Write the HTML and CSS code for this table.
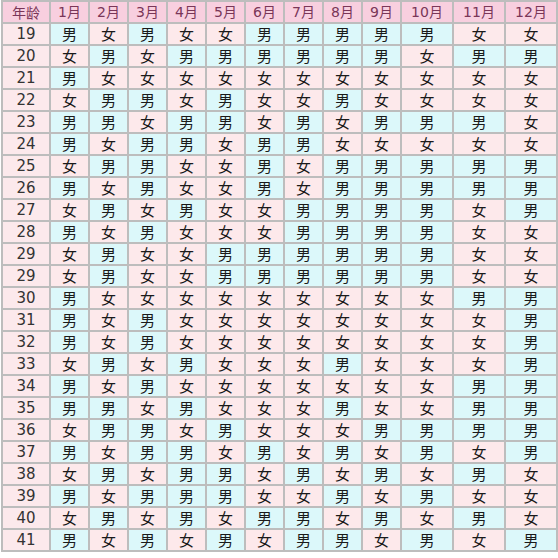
FILE: index.html
```html
<!DOCTYPE html>
<html lang="zh">
<head>
<meta charset="utf-8">
<title>生男生女表</title>
<link rel="stylesheet" href="styles.css">
</head>
<body>
<table class="chart">
<colgroup>
<col class="c-age"><col class="c-m"><col class="c-m"><col class="c-m"><col class="c-m"><col class="c-m"><col class="c-m"><col class="c-m"><col class="c-m"><col class="c-m"><col class="c-w"><col class="c-w"><col class="c-w">
</colgroup>
<thead>
<tr><th>年龄</th><th>1月</th><th>2月</th><th>3月</th><th>4月</th><th>5月</th><th>6月</th><th>7月</th><th>8月</th><th>9月</th><th>10月</th><th>11月</th><th>12月</th></tr>
</thead>
<tbody>
<tr><td class="age">19</td><td class="m">男</td><td class="f">女</td><td class="m">男</td><td class="f">女</td><td class="f">女</td><td class="m">男</td><td class="m">男</td><td class="m">男</td><td class="m">男</td><td class="m">男</td><td class="f">女</td><td class="f">女</td></tr>
<tr><td class="age">20</td><td class="f">女</td><td class="m">男</td><td class="f">女</td><td class="m">男</td><td class="m">男</td><td class="m">男</td><td class="m">男</td><td class="m">男</td><td class="m">男</td><td class="f">女</td><td class="m">男</td><td class="m">男</td></tr>
<tr><td class="age">21</td><td class="m">男</td><td class="f">女</td><td class="f">女</td><td class="f">女</td><td class="f">女</td><td class="f">女</td><td class="f">女</td><td class="f">女</td><td class="f">女</td><td class="f">女</td><td class="f">女</td><td class="f">女</td></tr>
<tr><td class="age">22</td><td class="f">女</td><td class="m">男</td><td class="m">男</td><td class="f">女</td><td class="m">男</td><td class="f">女</td><td class="f">女</td><td class="m">男</td><td class="f">女</td><td class="f">女</td><td class="f">女</td><td class="f">女</td></tr>
<tr><td class="age">23</td><td class="m">男</td><td class="m">男</td><td class="f">女</td><td class="m">男</td><td class="m">男</td><td class="f">女</td><td class="m">男</td><td class="f">女</td><td class="m">男</td><td class="m">男</td><td class="m">男</td><td class="f">女</td></tr>
<tr><td class="age">24</td><td class="m">男</td><td class="f">女</td><td class="m">男</td><td class="m">男</td><td class="f">女</td><td class="m">男</td><td class="m">男</td><td class="f">女</td><td class="f">女</td><td class="f">女</td><td class="f">女</td><td class="f">女</td></tr>
<tr><td class="age">25</td><td class="f">女</td><td class="m">男</td><td class="m">男</td><td class="f">女</td><td class="f">女</td><td class="m">男</td><td class="f">女</td><td class="m">男</td><td class="m">男</td><td class="m">男</td><td class="m">男</td><td class="m">男</td></tr>
<tr><td class="age">26</td><td class="m">男</td><td class="f">女</td><td class="m">男</td><td class="f">女</td><td class="f">女</td><td class="m">男</td><td class="f">女</td><td class="m">男</td><td class="m">男</td><td class="m">男</td><td class="m">男</td><td class="m">男</td></tr>
<tr><td class="age">27</td><td class="f">女</td><td class="m">男</td><td class="f">女</td><td class="m">男</td><td class="f">女</td><td class="f">女</td><td class="m">男</td><td class="m">男</td><td class="m">男</td><td class="m">男</td><td class="f">女</td><td class="m">男</td></tr>
<tr><td class="age">28</td><td class="m">男</td><td class="f">女</td><td class="m">男</td><td class="f">女</td><td class="f">女</td><td class="f">女</td><td class="m">男</td><td class="m">男</td><td class="m">男</td><td class="m">男</td><td class="f">女</td><td class="f">女</td></tr>
<tr><td class="age">29</td><td class="f">女</td><td class="m">男</td><td class="f">女</td><td class="f">女</td><td class="m">男</td><td class="m">男</td><td class="m">男</td><td class="m">男</td><td class="m">男</td><td class="m">男</td><td class="f">女</td><td class="f">女</td></tr>
<tr><td class="age">29</td><td class="f">女</td><td class="m">男</td><td class="f">女</td><td class="f">女</td><td class="m">男</td><td class="m">男</td><td class="m">男</td><td class="m">男</td><td class="m">男</td><td class="m">男</td><td class="f">女</td><td class="f">女</td></tr>
<tr><td class="age">30</td><td class="m">男</td><td class="f">女</td><td class="f">女</td><td class="f">女</td><td class="f">女</td><td class="f">女</td><td class="f">女</td><td class="f">女</td><td class="f">女</td><td class="f">女</td><td class="m">男</td><td class="m">男</td></tr>
<tr><td class="age">31</td><td class="m">男</td><td class="f">女</td><td class="m">男</td><td class="f">女</td><td class="f">女</td><td class="f">女</td><td class="f">女</td><td class="f">女</td><td class="f">女</td><td class="f">女</td><td class="f">女</td><td class="m">男</td></tr>
<tr><td class="age">32</td><td class="m">男</td><td class="f">女</td><td class="m">男</td><td class="f">女</td><td class="f">女</td><td class="f">女</td><td class="f">女</td><td class="f">女</td><td class="f">女</td><td class="f">女</td><td class="f">女</td><td class="m">男</td></tr>
<tr><td class="age">33</td><td class="f">女</td><td class="m">男</td><td class="f">女</td><td class="m">男</td><td class="f">女</td><td class="f">女</td><td class="f">女</td><td class="m">男</td><td class="f">女</td><td class="f">女</td><td class="f">女</td><td class="m">男</td></tr>
<tr><td class="age">34</td><td class="m">男</td><td class="f">女</td><td class="m">男</td><td class="f">女</td><td class="f">女</td><td class="f">女</td><td class="f">女</td><td class="f">女</td><td class="f">女</td><td class="f">女</td><td class="m">男</td><td class="m">男</td></tr>
<tr><td class="age">35</td><td class="m">男</td><td class="m">男</td><td class="f">女</td><td class="m">男</td><td class="f">女</td><td class="f">女</td><td class="f">女</td><td class="m">男</td><td class="f">女</td><td class="f">女</td><td class="m">男</td><td class="m">男</td></tr>
<tr><td class="age">36</td><td class="f">女</td><td class="m">男</td><td class="m">男</td><td class="f">女</td><td class="m">男</td><td class="f">女</td><td class="f">女</td><td class="f">女</td><td class="m">男</td><td class="m">男</td><td class="m">男</td><td class="m">男</td></tr>
<tr><td class="age">37</td><td class="m">男</td><td class="f">女</td><td class="m">男</td><td class="m">男</td><td class="f">女</td><td class="m">男</td><td class="f">女</td><td class="m">男</td><td class="f">女</td><td class="m">男</td><td class="f">女</td><td class="m">男</td></tr>
<tr><td class="age">38</td><td class="f">女</td><td class="m">男</td><td class="f">女</td><td class="m">男</td><td class="m">男</td><td class="f">女</td><td class="m">男</td><td class="f">女</td><td class="m">男</td><td class="f">女</td><td class="m">男</td><td class="f">女</td></tr>
<tr><td class="age">39</td><td class="m">男</td><td class="f">女</td><td class="m">男</td><td class="m">男</td><td class="m">男</td><td class="f">女</td><td class="f">女</td><td class="m">男</td><td class="f">女</td><td class="m">男</td><td class="f">女</td><td class="f">女</td></tr>
<tr><td class="age">40</td><td class="f">女</td><td class="m">男</td><td class="f">女</td><td class="m">男</td><td class="f">女</td><td class="m">男</td><td class="m">男</td><td class="f">女</td><td class="m">男</td><td class="f">女</td><td class="m">男</td><td class="f">女</td></tr>
<tr><td class="age">41</td><td class="m">男</td><td class="f">女</td><td class="m">男</td><td class="f">女</td><td class="m">男</td><td class="f">女</td><td class="m">男</td><td class="m">男</td><td class="f">女</td><td class="m">男</td><td class="f">女</td><td class="m">男</td></tr>
</tbody>
</table>
</body>
</html>
```

FILE: styles.css
```css
html, body {
  margin: 0;
  padding: 0;
  background: #ffffff;
}
body {
  padding: 0 0 0 1px;
}
.chart {
  border-collapse: collapse;
  table-layout: fixed;
  width: 555px;
  font-family: "Noto Sans CJK SC", "DejaVu Sans", sans-serif;
  font-size: 15px;
  color: #1a1a1a;
}
.c-age { width: 48px; }
.c-m { width: 39px; }
.c-w { width: 52px; }
.chart th,
.chart td {
  border: 2px solid #bdbdbd;
  height: 20px;
  padding: 0;
  text-align: center;
  vertical-align: middle;
  line-height: 18px;
}
.chart th {
  background: #f8cfdf;
  color: #7a3658;
  font-weight: normal;
  font-family: "DejaVu Sans", "Noto Sans CJK SC", sans-serif;
  font-size: 14px;
}
.chart th:first-child {
  font-family: "Noto Sans CJK SC", sans-serif;
  font-size: 14px;
}
.chart td.age {
  background: #fce9ec;
  color: #333333;
  font-family: "DejaVu Sans", sans-serif;
  font-size: 15px;
}
.chart td.m {
  background: #dcf8fa;
}
.chart td.f {
  background: #fde9eb;
}
```
